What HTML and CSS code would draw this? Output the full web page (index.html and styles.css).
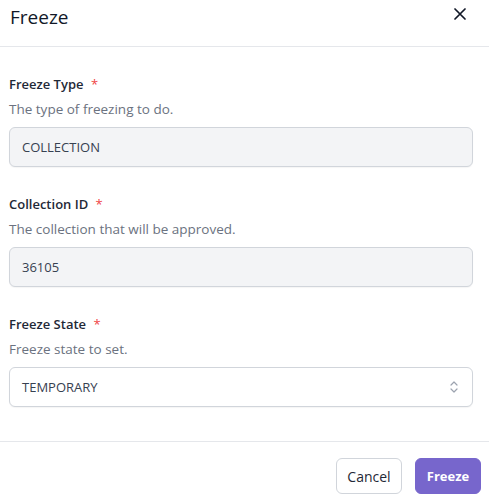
FILE: index.html
```html
<!DOCTYPE html>
<html lang="en">
<head>
<meta charset="utf-8">
<title>Freeze</title>
<link rel="stylesheet" href="styles.css">
</head>
<body>
<div class="dialog">
  <header class="dialog-header">
    <h1 class="dialog-title">Freeze</h1>
    <button class="close-btn" type="button" aria-label="Close">
      <svg width="12" height="12" viewBox="0 0 12 12"><path d="M1 1L11 11M11 1L1 11" stroke="#111827" stroke-width="1.7" stroke-linecap="round" fill="none"/></svg>
    </button>
  </header>
  <main class="dialog-body">
    <div class="field">
      <div class="field-label">Freeze Type <span class="req">*</span></div>
      <div class="field-desc">The type of freezing to do.</div>
      <div class="input input-disabled">COLLECTION</div>
    </div>
    <div class="field">
      <div class="field-label">Collection ID <span class="req">*</span></div>
      <div class="field-desc">The collection that will be approved.</div>
      <div class="input input-disabled">36105</div>
    </div>
    <div class="field">
      <div class="field-label">Freeze State <span class="req">*</span></div>
      <div class="field-desc">Freeze state to set.</div>
      <div class="input input-select">
        <span>TEMPORARY</span>
        <svg class="chevrons" width="8" height="14" viewBox="0 0 8 14"><path d="M1 5L4 2L7 5M1 9L4 12L7 9" stroke="#9ca3af" stroke-width="1.2" fill="none" stroke-linecap="round" stroke-linejoin="round"/></svg>
      </div>
    </div>
  </main>
  <footer class="dialog-footer">
    <button class="btn btn-secondary" type="button">Cancel</button>
    <button class="btn btn-primary" type="button">Freeze</button>
  </footer>
</div>
</body>
</html>
```

FILE: styles.css
```css
* { box-sizing: border-box; }
html, body { margin: 0; padding: 0; background: #ffffff; }
body {
  font-family: "Open Sans", "Noto Sans", sans-serif;
  color: #1f2937;
  width: 489px;
  height: 501px;
  overflow: hidden;
}
.dialog { display: flex; flex-direction: column; }
.dialog-header {
  height: 47px;
  border-bottom: 1px solid #e5e7eb;
  display: flex;
  align-items: flex-start;
  justify-content: space-between;
  padding: 0 16px 0 10px;
}
.dialog-title {
  margin: 0;
  font-size: 19px;
  font-weight: 400;
  line-height: 24px;
  padding-top: 5px;
  color: #111827;
}
.close-btn {
  border: 0;
  background: none;
  padding: 0;
  margin-top: 8px;
  margin-right: 7px;
  width: 12px;
  height: 12px;
  display: flex;
}
.dialog-body {
  padding: 27px 16px 34px 9px;
  display: flex;
  flex-direction: column;
  gap: 27px;
}
.field { display: flex; flex-direction: column; }
.field-label {
  font-size: 13px;
  font-weight: 600;
  line-height: 20px;
  color: #1f2937;
}
.req { color: #ef4444; margin-left: 4px; font-weight: 400; }
.field-desc {
  margin-top: 5px;
  font-size: 13.5px;
  line-height: 20px;
  color: #6b7280;
}
.input {
  margin-top: 8px;
  height: 40px;
  border: 1px solid #d1d5db;
  border-radius: 6px;
  padding: 0 12px;
  display: flex;
  align-items: center;
  font-size: 13px;
  color: #374151;
  box-shadow: 0 1px 1px rgba(0,0,0,0.04);
}
.input-disabled { background: #f3f4f6; }
.input-select { background: #ffffff; justify-content: space-between; padding-right: 14px; }
.chevrons { display: block; }
.dialog-footer {
  border-top: 1px solid #e5e7eb;
  padding: 16px 8px 0 0;
  display: flex;
  justify-content: flex-end;
  gap: 13px;
}
.btn {
  height: 36px;
  min-width: 66px;
  border-radius: 6px;
  font-family: inherit;
  padding: 0 8px;
  display: flex;
  align-items: center;
  justify-content: center;
  cursor: pointer;
}
.btn-secondary {
  background: #ffffff;
  border: 1px solid #d1d5db;
  color: #1f2937;
  font-size: 14px;
  font-weight: 500;
}
.btn-primary {
  background: #7766cc;
  border: 1px solid #7766cc;
  color: #ffffff;
  font-size: 13px;
  font-weight: 700;
}
```
